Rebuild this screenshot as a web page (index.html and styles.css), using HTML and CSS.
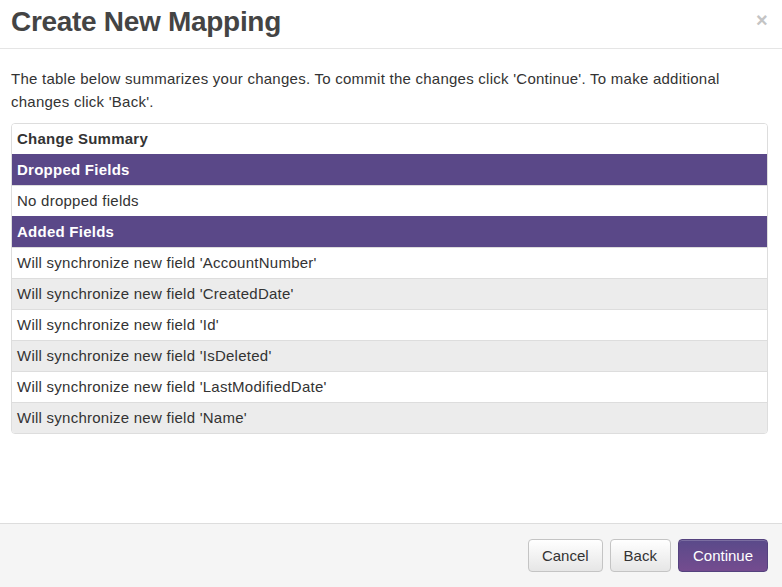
FILE: index.html
```html
<!DOCTYPE html>
<html>
<head>
<meta charset="utf-8">
<link rel="stylesheet" href="styles.css">
</head>
<body>
<div class="modal">
  <div class="modal-header">
    <h3>Create New Mapping</h3>
    <span class="close">&times;</span>
  </div>
  <div class="modal-body">
    <p class="intro">The table below summarizes your changes. To commit the changes click 'Continue'. To make additional changes click 'Back'.</p>
    <div class="summary">
      <div class="row head">Change Summary</div>
      <div class="row section">Dropped Fields</div>
      <div class="row">No dropped fields</div>
      <div class="row section">Added Fields</div>
      <div class="row">Will synchronize new field 'AccountNumber'</div>
      <div class="row alt">Will synchronize new field 'CreatedDate'</div>
      <div class="row">Will synchronize new field 'Id'</div>
      <div class="row alt">Will synchronize new field 'IsDeleted'</div>
      <div class="row">Will synchronize new field 'LastModifiedDate'</div>
      <div class="row alt last">Will synchronize new field 'Name'</div>
    </div>
  </div>
  <div class="modal-footer">
    <button class="btn">Cancel</button>
    <button class="btn">Back</button>
    <button class="btn primary">Continue</button>
  </div>
</div>
</body>
</html>
```
FILE: styles.css
```css
html, body {
  margin: 0;
  padding: 0;
  background: #fff;
}
body {
  font-family: "Liberation Sans", Arial, sans-serif;
  font-size: 15px;
  letter-spacing: 0.25px;
  color: #333;
  width: 782px;
  height: 587px;
  overflow: hidden;
}
.modal {
  display: flex;
  flex-direction: column;
  height: 587px;
}
.modal-header {
  display: flex;
  align-items: center;
  justify-content: space-between;
  height: 48px;
  padding: 0 14px 0 11px;
  border-bottom: 1px solid #e5e5e5;
}
.modal-header h3 {
  margin: 0;
  font-size: 28px;
  font-weight: bold;
  color: #444;
  letter-spacing: -0.3px;
  position: relative;
  top: -2px;
}
.close {
  font-size: 20px;
  font-weight: bold;
  color: #c4c4c4;
  line-height: 1;
  position: relative;
  top: -4px;
}
.modal-body {
  flex: 1;
  padding: 18px 14px 0 11px;
}
.intro {
  margin: 0 0 10px 0;
  line-height: 23px;
  color: #333;
}
.summary {
  border: 1px solid #ddd;
  border-radius: 4px;
  overflow: hidden;
}
.row {
  height: 30px;
  line-height: 30px;
  padding: 0 5px;
  border-top: 1px solid #ddd;
  background: #fff;
}
.row.head {
  border-top: none;
  font-weight: bold;
}
.row.section {
  background: #5a4888;
  color: #fff;
  font-weight: bold;
  border-top-color: #5a4888;
}
.row.alt {
  background: #ececec;
}
.modal-footer {
  display: flex;
  justify-content: flex-end;
  gap: 7px;
  height: 64px;
  padding: 15px 14px 0 0;
  box-sizing: border-box;
  background: #f5f5f5;
  border-top: 1px solid #ddd;
}
.btn {
  height: 33px;
  padding: 0 13px;
  font-family: "Liberation Sans", Arial, sans-serif;
  font-size: 15px;
  color: #333;
  background: linear-gradient(#fff, #e6e6e6);
  border: 1px solid #c4c4c4;
  border-radius: 4px;
  box-shadow: inset 0 1px 0 rgba(255,255,255,.2);
}
.btn.primary {
  color: #fff;
  background: linear-gradient(#5a4a8a, #744c8f);
  border-color: #54427e;
  padding: 0 14px;
}
```
